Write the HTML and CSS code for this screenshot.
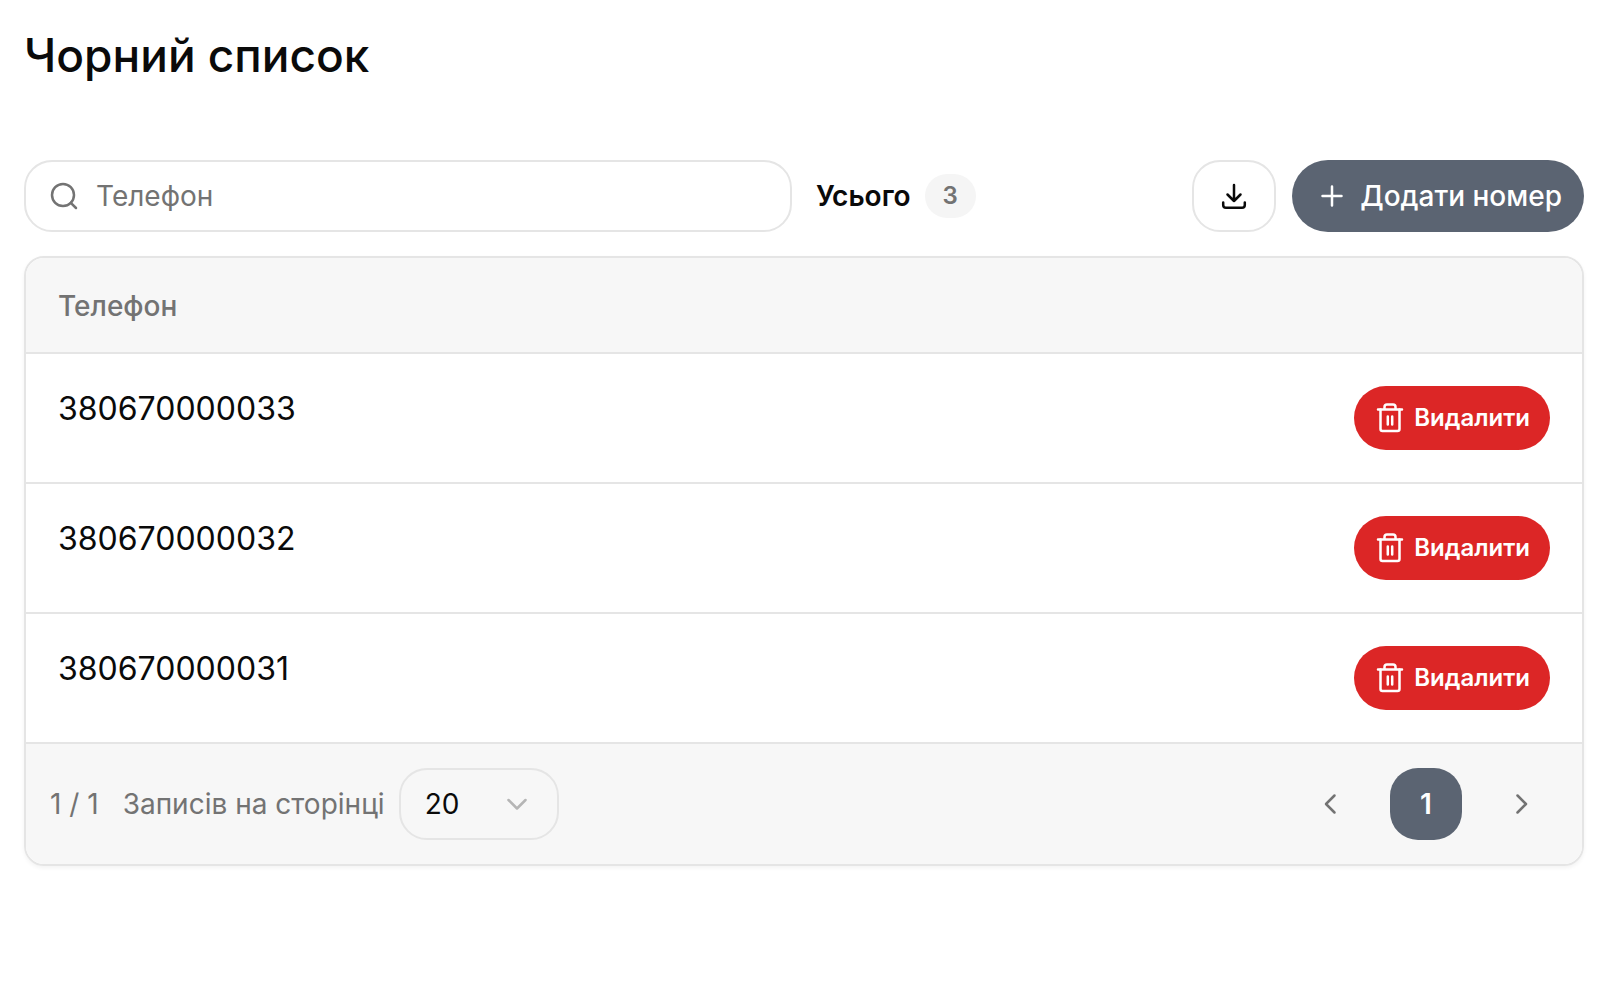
FILE: index.html
```html
<!DOCTYPE html>
<html lang="uk">
<head>
<meta charset="UTF-8">
<meta name="viewport" content="width=device-width, initial-scale=1.0">
<title>Чорний список</title>
<link rel="stylesheet" href="styles.css">
</head>
<body>
    <main class="page">
        <h1>Чорний список</h1>

        <div class="toolbar">
            <label class="search">
                <svg width="32" height="32" viewBox="0 0 32 32">
                    <circle cx="15" cy="15" r="11"/>
                    <path d="M22.8 22.8L28 28"/>
                </svg>
                <input type="text" id="search" placeholder="Телефон" aria-label="Телефон">
            </label>
            <div class="total">Усього <span class="badge">3</span></div>
            <div class="actions">
                <button type="button" class="btn-download" aria-label="Завантажити">
                    <svg width="32" height="32" viewBox="0 0 32 32">
                        <path d="M16 5V21M9.5 14.5L16 21L22.5 14.5"/>
                        <path d="M5.2 22.5V25Q5.2 27.8 8 27.8H24Q26.8 27.8 26.8 25V22.5"/>
                    </svg>
                </button>
                <button type="button" class="btn-add">
                    <svg width="32" height="32" viewBox="0 0 32 32">
                        <path d="M16 6.5V25.5M6.5 16H25.5"/>
                    </svg>
                    Додати номер
                </button>
            </div>
        </div>

        <div class="card">
            <table>
                <thead>
                    <tr>
                        <th colspan="2">Телефон</th>
                    </tr>
                </thead>
                <tbody>
                    <tr>
                        <td>380670000033</td>
                        <td class="cell-action">
                            <button type="button" class="btn-delete">
                                <svg width="32" height="32" viewBox="0 0 32 32">
                                    <path d="M4 7.5H28M10.5 7.5V5Q10.5 2.5 13 2.5H19Q21.5 2.5 21.5 5V7.5"/>
                                    <path d="M6.5 7.5V27Q6.5 29 8.5 29H23.5Q25.5 29 25.5 27V7.5M13.8 14.5V22.5M18.2 14.5V22.5"/>
                                </svg>
                                Видалити
                            </button>
                        </td>
                    </tr>
                    <tr>
                        <td>380670000032</td>
                        <td class="cell-action">
                            <button type="button" class="btn-delete">
                                <svg width="32" height="32" viewBox="0 0 32 32">
                                    <path d="M4 7.5H28M10.5 7.5V5Q10.5 2.5 13 2.5H19Q21.5 2.5 21.5 5V7.5"/>
                                    <path d="M6.5 7.5V27Q6.5 29 8.5 29H23.5Q25.5 29 25.5 27V7.5M13.8 14.5V22.5M18.2 14.5V22.5"/>
                                </svg>
                                Видалити
                            </button>
                        </td>
                    </tr>
                    <tr>
                        <td>380670000031</td>
                        <td class="cell-action">
                            <button type="button" class="btn-delete">
                                <svg width="32" height="32" viewBox="0 0 32 32">
                                    <path d="M4 7.5H28M10.5 7.5V5Q10.5 2.5 13 2.5H19Q21.5 2.5 21.5 5V7.5"/>
                                    <path d="M6.5 7.5V27Q6.5 29 8.5 29H23.5Q25.5 29 25.5 27V7.5M13.8 14.5V22.5M18.2 14.5V22.5"/>
                                </svg>
                                Видалити
                            </button>
                        </td>
                    </tr>
                </tbody>
            </table>

            <div class="card-footer">
                <span>1 / 1</span>
                <label for="pageSize">Записів на сторінці</label>
                <div class="select">
                    <select id="pageSize">
                        <option>10</option>
                        <option selected>20</option>
                        <option>50</option>
                    </select>
                    <svg width="32" height="32" viewBox="0 0 32 32">
                        <path d="M7.5 12L16 20.5L24.5 12"/>
                    </svg>
                </div>
                <nav class="pagination">
                    <button type="button" aria-label="Назад">
                        <svg width="32" height="32" viewBox="0 0 32 32">
                            <path d="M20.5 7.5L12 16L20.5 24.5"/>
                        </svg>
                    </button>
                    <button type="button" class="active">1</button>
                    <button type="button" aria-label="Вперед">
                        <svg width="32" height="32" viewBox="0 0 32 32">
                            <path d="M11.5 7.5L20 16L11.5 24.5"/>
                        </svg>
                    </button>
                </nav>
            </div>
        </div>
    </main>
</body>
</html>
```

FILE: styles.css
```css
* {
    box-sizing: border-box;
}
body {
    margin: 0;
    background-color: #fff;
    color: #0a0a0a;
    font-family: Inter, sans-serif;
    font-size: 28px;
    line-height: 40px;
}
.page {
    padding: 24px;
}
h1 {
    margin: 0 0 74px;
    font-size: 46px;
    font-weight: 500;
    line-height: 62px;
}
button, input, select {
    font: inherit;
    color: inherit;
}
button {
    display: inline-flex;
    align-items: center;
    justify-content: center;
    border: none;
    background: none;
    padding: 0;
    cursor: pointer;
}
svg {
    flex: none;
    fill: none;
    stroke: currentColor;
    stroke-width: 2.5;
    stroke-linecap: round;
    stroke-linejoin: round;
}
.toolbar {
    display: flex;
    align-items: center;
    gap: 24px;
    margin-bottom: 24px;
}
.search {
    display: flex;
    align-items: center;
    gap: 16px;
    width: 768px;
    height: 72px;
    padding: 0 22px;
    border: 2px solid #e5e5e5;
    border-radius: 28px;
    color: #737373;
}
.search input {
    flex: 1;
    min-width: 0;
    padding: 0;
    border: none;
    outline: none;
    background: none;
    color: #0a0a0a;
}
.search input::placeholder {
    color: #737373;
    opacity: 1;
}
.total {
    display: flex;
    align-items: center;
    gap: 14px;
    font-weight: 600;
}
.badge {
    padding: 2px 18px;
    border-radius: 22px;
    background-color: #f5f5f5;
    color: #737373;
    font-size: 24px;
    font-weight: 600;
}
.actions {
    display: flex;
    gap: 16px;
    margin-left: auto;
}
.btn-download {
    width: 84px;
    height: 72px;
    border: 2px solid #e5e5e5;
    border-radius: 28px;
}
.btn-add {
    gap: 12px;
    height: 72px;
    padding: 0 22px 0 24px;
    border-radius: 36px;
    background-color: #5b6472;
    color: #fff;
    font-weight: 500;
}
.card {
    border: 2px solid #e5e5e5;
    border-radius: 20px;
    overflow: hidden;
    box-shadow: 0 2px 4px rgba(0, 0, 0, 0.05);
}
table {
    width: 100%;
    border-collapse: separate;
    border-spacing: 0;
}
th, td {
    border-bottom: 2px solid #e5e5e5;
    text-align: left;
    vertical-align: top;
}
th {
    padding: 28px 32px 26px;
    background-color: #f7f7f7;
    color: #737373;
    font-weight: 500;
}
td {
    padding: 32px;
    font-size: 32px;
    line-height: 46px;
}
.cell-action {
    text-align: right;
}
.btn-delete {
    gap: 8px;
    height: 64px;
    padding: 0 20px;
    border-radius: 32px;
    background-color: #dc2626;
    color: #fff;
    font-size: 24px;
    font-weight: 600;
    vertical-align: top;
}
.card-footer {
    display: flex;
    align-items: center;
    padding: 24px;
    background-color: #f7f7f7;
    color: #737373;
}
.card-footer label {
    margin: 0 14px 0 24px;
}
.select {
    position: relative;
    width: 160px;
}
.select select {
    appearance: none;
    width: 100%;
    height: 72px;
    padding: 0 24px;
    border: 2px solid #e5e5e5;
    border-radius: 28px;
    background: none;
    color: #0a0a0a;
}
.select svg {
    position: absolute;
    top: 20px;
    right: 26px;
    color: #b5b5b5;
    pointer-events: none;
}
.pagination {
    display: flex;
    gap: 24px;
    margin-left: auto;
}
.pagination button {
    width: 72px;
    height: 72px;
    border-radius: 28px;
}
.pagination .active {
    background-color: #5b6472;
    color: #fff;
    font-weight: 600;
}
```
